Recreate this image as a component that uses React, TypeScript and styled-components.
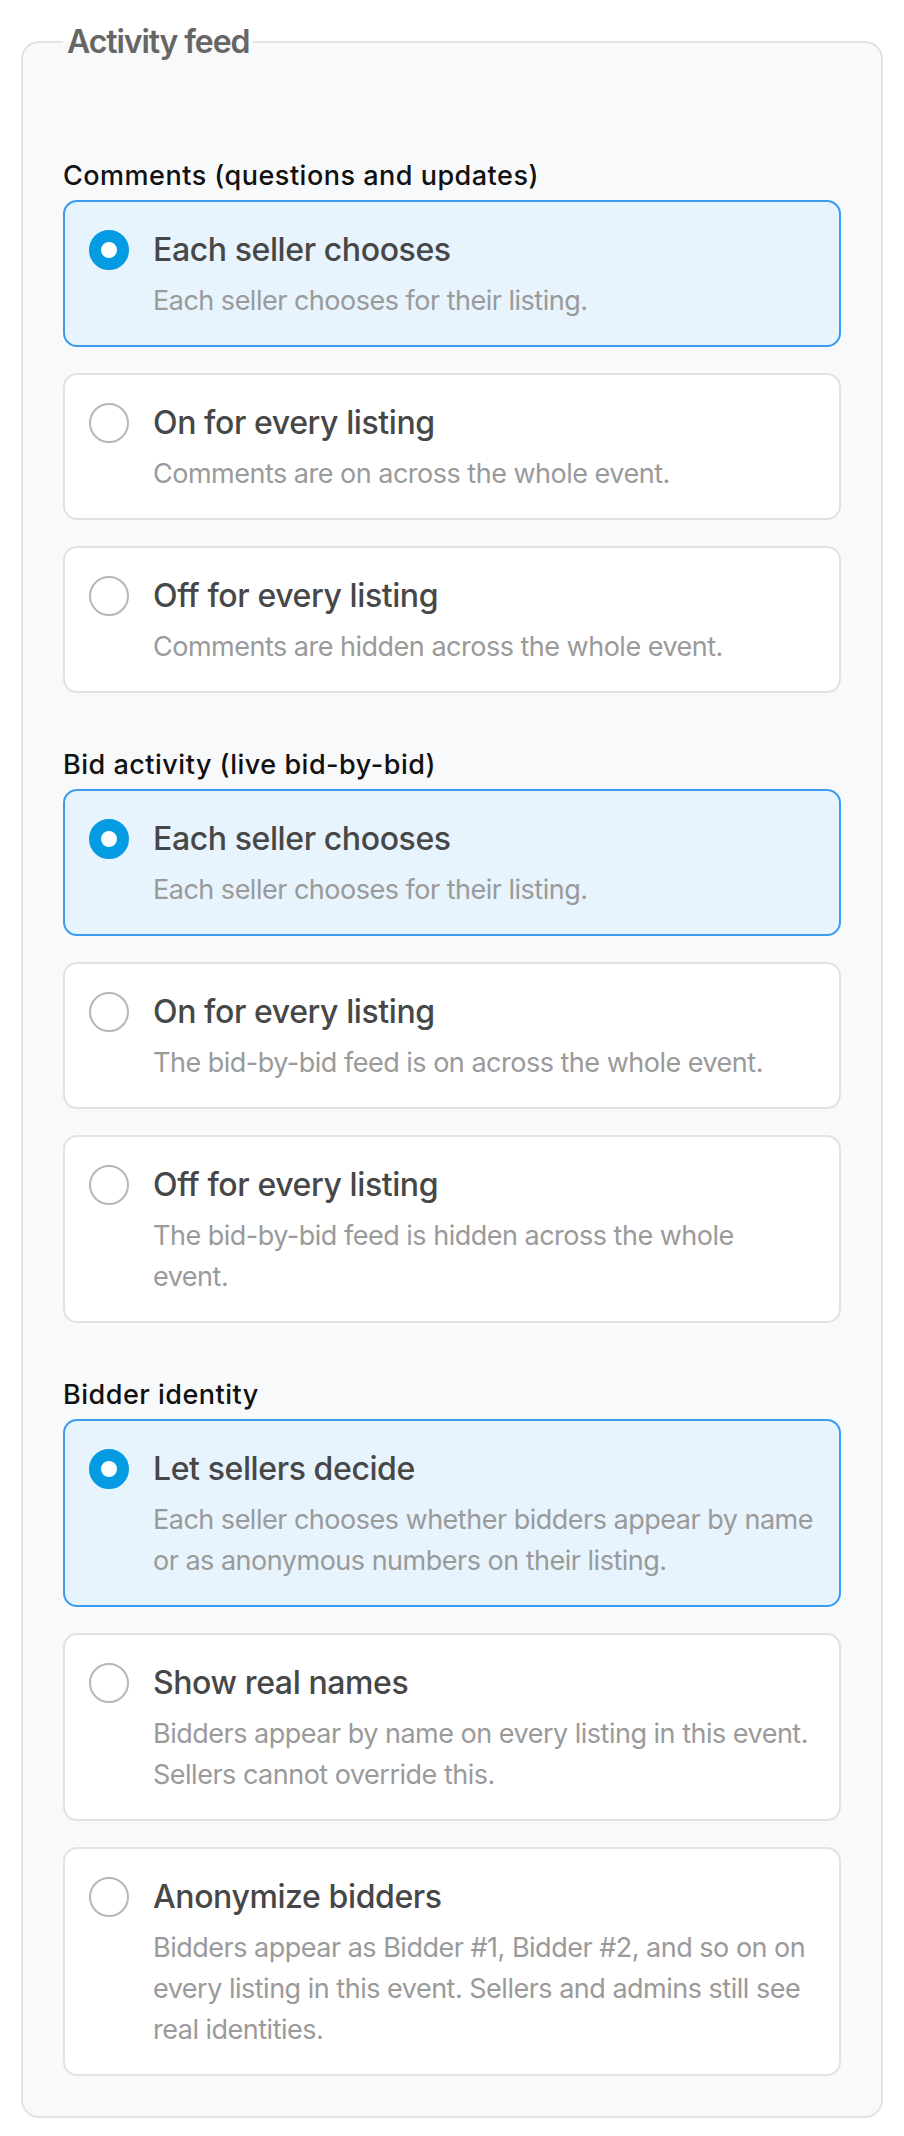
import { useState } from "react";
import styled, { createGlobalStyle } from "styled-components";

const GlobalStyle = createGlobalStyle`
  body {
    margin: 0;
    background: #ffffff;
    font-family: Inter, "Noto Sans", "Liberation Sans", sans-serif;
  }
`;

const Page = styled.div`
  padding: 18px 21px 19px;
`;

const Fieldset = styled.fieldset`
  margin: 0;
  min-width: 0;
  border: 2px solid #e2e4e7;
  border-radius: 18px;
  background: #f8f9fb;
  padding: 92px 40px 40px;
  display: flex;
  flex-direction: column;
  gap: 54px;
`;

const Legend = styled.legend`
  padding: 0 4px;
  font-size: 32px;
  line-height: 48px;
  font-weight: 600;
  letter-spacing: -1.1px;
  color: #666666;
`;

const Section = styled.div`
  display: flex;
  flex-direction: column;
`;

const GroupLabel = styled.div`
  font-size: 27px;
  line-height: 36px;
  font-weight: 500;
  letter-spacing: 0.5px;
  color: #111111;
  margin-bottom: 6px;
`;

const Options = styled.div`
  display: flex;
  flex-direction: column;
  gap: 26px;
`;

const Card = styled.label<{ $checked: boolean }>`
  display: flex;
  align-items: flex-start;
  gap: 24px;
  padding: 24px;
  border-radius: 14px;
  border: 2px solid ${(p) => (p.$checked ? "#3a9bef" : "#e0e3e6")};
  background: ${(p) => (p.$checked ? "#e7f4fd" : "#ffffff")};
  cursor: pointer;
`;

const HiddenInput = styled.input.attrs({ type: "radio" })`
  position: absolute;
  opacity: 0;
  width: 0;
  height: 0;
`;

const Dot = styled.span<{ $checked: boolean }>`
  flex: none;
  box-sizing: border-box;
  width: 40px;
  height: 40px;
  margin-top: 4px;
  border-radius: 50%;
  background: #ffffff;
  border: ${(p) => (p.$checked ? "12px solid #059be3" : "2px solid #b5b8bb")};
`;

const Text = styled.span`
  display: flex;
  flex-direction: column;
  gap: 6px;
  min-width: 0;
`;

const Title = styled.span`
  font-size: 32px;
  line-height: 48px;
  font-weight: 500;
  letter-spacing: -0.4px;
  color: #474747;
`;

const Desc = styled.span`
  font-size: 27px;
  line-height: 41px;
  letter-spacing: -0.5px;
  color: #9a9a9a;
`;

type Option = { value: string; title: string; desc: string };
type Group = { name: string; label: string; options: Option[] };

const groups: Group[] = [
  {
    name: "comments",
    label: "Comments (questions and updates)",
    options: [
      { value: "seller", title: "Each seller chooses", desc: "Each seller chooses for their listing." },
      { value: "on", title: "On for every listing", desc: "Comments are on across the whole event." },
      { value: "off", title: "Off for every listing", desc: "Comments are hidden across the whole event." },
    ],
  },
  {
    name: "bids",
    label: "Bid activity (live bid-by-bid)",
    options: [
      { value: "seller", title: "Each seller chooses", desc: "Each seller chooses for their listing." },
      { value: "on", title: "On for every listing", desc: "The bid-by-bid feed is on across the whole event." },
      { value: "off", title: "Off for every listing", desc: "The bid-by-bid feed is hidden across the whole event." },
    ],
  },
  {
    name: "identity",
    label: "Bidder identity",
    options: [
      {
        value: "seller",
        title: "Let sellers decide",
        desc: "Each seller chooses whether bidders appear by name or as anonymous numbers on their listing.",
      },
      {
        value: "real",
        title: "Show real names",
        desc: "Bidders appear by name on every listing in this event. Sellers cannot override this.",
      },
      {
        value: "anon",
        title: "Anonymize bidders",
        desc: "Bidders appear as Bidder #1, Bidder #2, and so on on every listing in this event. Sellers and admins still see real identities.",
      },
    ],
  },
];

const RadioGroup = ({ group }: { group: Group }) => {
  const [selected, setSelected] = useState(group.options[0].value);

  return (
    <Section>
      <GroupLabel>{group.label}</GroupLabel>
      <Options>
        {group.options.map((opt) => {
          const checked = selected === opt.value;
          return (
            <Card key={opt.value} $checked={checked}>
              <HiddenInput
                name={group.name}
                value={opt.value}
                checked={checked}
                onChange={() => setSelected(opt.value)}
              />
              <Dot $checked={checked} />
              <Text>
                <Title>{opt.title}</Title>
                <Desc>{opt.desc}</Desc>
              </Text>
            </Card>
          );
        })}
      </Options>
    </Section>
  );
};

const App = () => {
  return (
    <Page>
      <GlobalStyle />
      <Fieldset>
        <Legend>Activity feed</Legend>
        {groups.map((g) => (
          <RadioGroup key={g.name} group={g} />
        ))}
      </Fieldset>
    </Page>
  );
};

export default App;
